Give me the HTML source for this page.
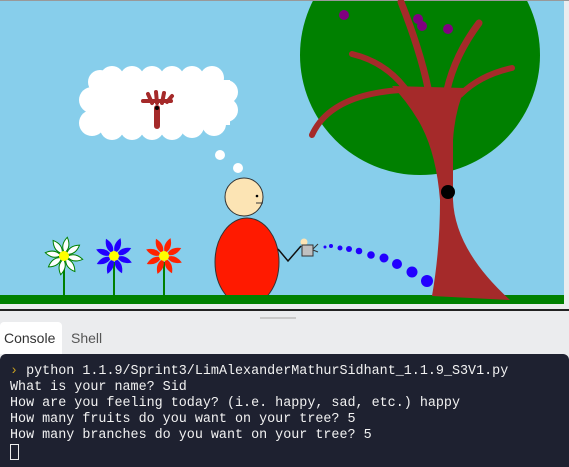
<!DOCTYPE html>
<html><head><meta charset="utf-8"><style>
html,body{margin:0;padding:0;width:569px;height:467px;overflow:hidden;background:#ebecee;font-family:"Liberation Sans",sans-serif}
#top{position:absolute;left:0;top:0;width:569px;height:311px;background:#d4d4d4}
#con{position:absolute;left:0;top:354px;width:569px;height:113px;background:#1e2130;border-radius:6px 6px 0 0;color:#f2f2f2;font-family:"Liberation Mono","DejaVu Sans Mono",monospace;font-size:13.4px;line-height:16px;padding:10px 0 0 10px;box-sizing:border-box;white-space:pre}
.tab{position:absolute;top:322px;height:32px;line-height:32px;font-size:14px;color:#333}
</style></head><body>
<div id="top">
<svg width="569" height="311" viewBox="0 0 569 311" xmlns="http://www.w3.org/2000/svg">
<rect x="0" y="0" width="569" height="311" fill="#ebecee"/>
<rect x="0" y="1" width="564" height="303" fill="#87ceeb"/>
<rect x="0" y="0" width="569" height="1" fill="#999"/>
<rect x="0" y="295" width="564" height="9" fill="#008000"/>
<rect x="0" y="309" width="569" height="2" fill="#222"/>
<circle cx="420" cy="55" r="120" fill="#008000"/>
<rect x="290" y="0" width="270" height="1" fill="#999"/>
<g fill="#800080"><circle cx="344" cy="15" r="5"/><circle cx="418" cy="19" r="5"/><circle cx="422" cy="26" r="5"/><circle cx="448" cy="29" r="5"/></g>
<g stroke="#a52a2a" stroke-linecap="round" fill="none" stroke-width="6">
<path d="M312 135 Q330 95 400 90"/>
<path d="M352 54 Q385 62 405 88"/>
<path d="M401 2 Q420 50 428 88" stroke-width="7"/>
<path d="M479 23 Q455 55 447 90" stroke-width="7"/>
<path d="M512 68 Q480 75 460 95"/>
</g>
<path d="M392 86 L465 88 Q455 110 453 140 L453 200 Q455 250 510 300 L432 296 Q440 250 440 200 Q436 150 418 120 Q406 100 392 86 Z" fill="#a52a2a"/>
<circle cx="448" cy="192" r="7" fill="#000"/>
<g fill="#2200ff"><circle cx="325" cy="247" r="1.5"/><circle cx="331" cy="246" r="2"/><circle cx="340" cy="248" r="2.5"/><circle cx="349" cy="249" r="3"/><circle cx="359" cy="251" r="3.3"/><circle cx="371" cy="255" r="3.8"/><circle cx="384" cy="258" r="4.5"/><circle cx="397" cy="264" r="5"/><circle cx="412" cy="272" r="5.5"/><circle cx="427" cy="281" r="6"/></g>
<g fill="#fff">
<circle cx="92" cy="100" r="13"/><circle cx="92" cy="123" r="13"/><circle cx="100" cy="82" r="12"/>
<circle cx="112" cy="78" r="12"/><circle cx="132" cy="78" r="12"/><circle cx="152" cy="78" r="12"/><circle cx="172" cy="78" r="12"/><circle cx="192" cy="78" r="12"/><circle cx="212" cy="78" r="12"/>
<circle cx="112" cy="128" r="12"/><circle cx="132" cy="128" r="12"/><circle cx="152" cy="128" r="12"/><circle cx="172" cy="128" r="12"/><circle cx="192" cy="126" r="12"/><circle cx="214" cy="124" r="12"/>
<circle cx="226" cy="92" r="12"/><circle cx="226" cy="110" r="12"/>
<rect x="95" y="80" width="135" height="45"/>
<circle cx="220" cy="155" r="5"/><circle cx="238" cy="168" r="5"/>
</g>
<g stroke="#a52a2a" stroke-linecap="round" fill="none" stroke-width="6">
<path d="M157 108 L157 126"/><path d="M143 101 L171 101" stroke-width="4"/>
<path d="M152 103 L148 94 M157 103 L156 92 M162 103 L164 93 M167 102 L172 96" stroke-width="4"/>
</g>
<circle cx="157" cy="108" r="2" fill="#000"/>
<g stroke="#008000" stroke-width="2"><path d="M64 262V296M114 262V296M164 262V296"/></g>
<defs><g id="pw"><path id="pt" d="M0 -3 Q-6 -10 0 -19 Q6 -10 0 -3 Z"/><use href="#pt" transform="rotate(45)"/><use href="#pt" transform="rotate(90)"/><use href="#pt" transform="rotate(135)"/><use href="#pt" transform="rotate(180)"/><use href="#pt" transform="rotate(225)"/><use href="#pt" transform="rotate(270)"/><use href="#pt" transform="rotate(315)"/></g></defs>
<g transform="translate(64,256) rotate(10)" fill="#fff" stroke="#008000" stroke-width="1"><use href="#pw"/></g>
<circle cx="64" cy="256" r="5" fill="#ffff00"/>
<g transform="translate(114,256) rotate(20)" fill="#2200ff"><use href="#pw"/></g>
<circle cx="114" cy="256" r="5" fill="#ffff00"/>
<g transform="translate(164,256) rotate(20)" fill="#ff2200"><use href="#pw"/></g>
<circle cx="164" cy="256" r="5" fill="#ffff00"/>
<clipPath id="bc"><rect x="0" y="0" width="300" height="295"/></clipPath>
<ellipse cx="247" cy="262" rx="32" ry="44" fill="#ff1a00" stroke="#333" stroke-width="1" clip-path="url(#bc)"/>
<circle cx="244" cy="197" r="19" fill="#fce4b4" stroke="#333" stroke-width="1"/>
<circle cx="257" cy="196" r="1.3" fill="#000"/><path d="M256 203H263" stroke="#333"/>
<path d="M278 249 L288 261 L301 246" stroke="#111" stroke-width="1.5" fill="none"/>
<circle cx="304" cy="242" r="3.5" fill="#fce4b4"/>
<rect x="302" y="245" width="11" height="11" fill="#c0c0c0" stroke="#333"/>
<path d="M313 249 L318 244 M313 250 L318 252" stroke="#333"/>
</svg>
</div>
<div style="position:absolute;left:0;top:311px;width:569px;height:43px;background:#ebecee"></div>
<div style="position:absolute;left:260px;top:317px;width:36px;height:2px;background:#c9c9c9"></div>
<div style="position:absolute;left:0;top:322px;width:62px;height:32px;background:#fff;border-radius:4px 4px 0 0"></div>
<div class="tab" style="left:4px">Console</div>
<div class="tab" style="left:71px;color:#555">Shell</div>
<div id="con"><span style="color:#c8a020">›</span> python 1.1.9/Sprint3/LimAlexanderMathurSidhant_1.1.9_S3V1.py
What is your name? Sid
How are you feeling today? (i.e. happy, sad, etc.) happy
How many fruits do you want on your tree? 5
How many branches do you want on your tree? 5
<span style="display:inline-block;width:7px;height:14px;border:1px solid #eee;vertical-align:top"></span></div>
</body></html>
